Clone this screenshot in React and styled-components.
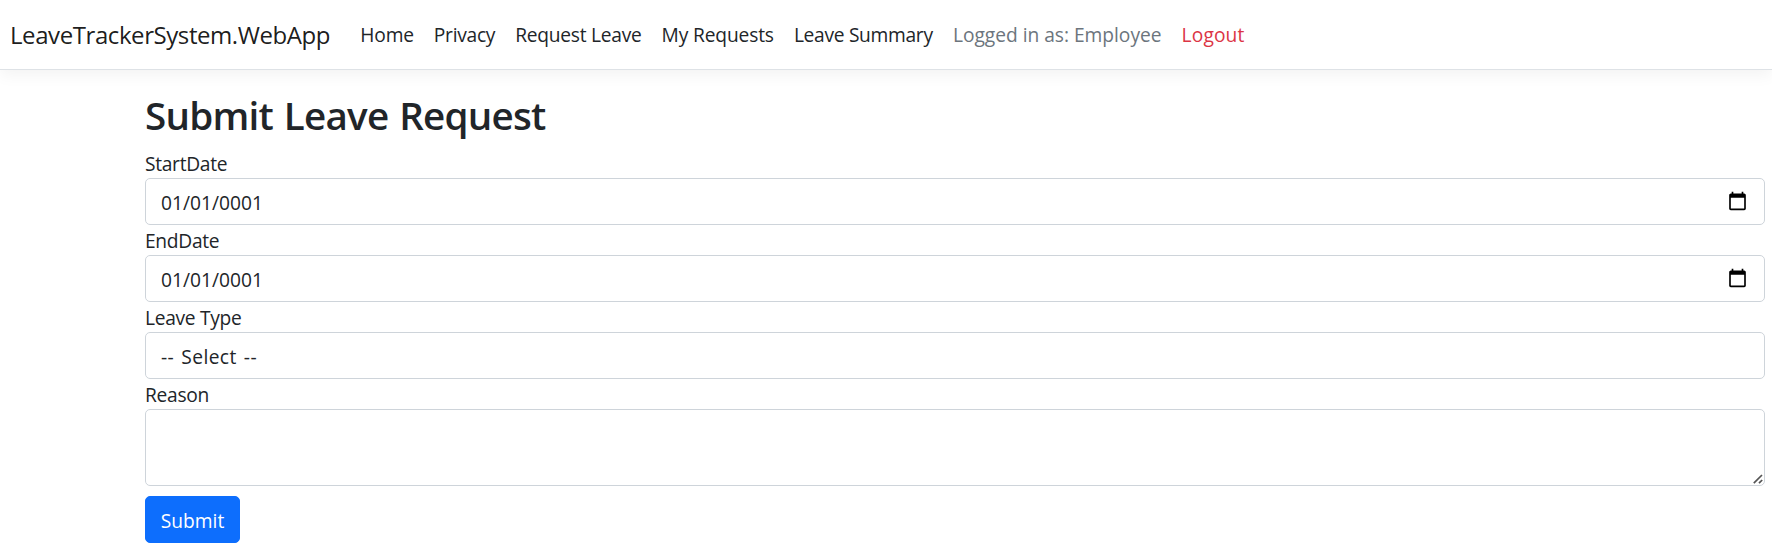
import React from "react";
import styled, { createGlobalStyle, css } from "styled-components";

const GlobalStyle = createGlobalStyle`
  *, *::before, *::after { box-sizing: border-box; }
  body {
    margin: 0;
    background: #fff;
    color: #212529;
    font-family: "Segoe UI", "Open Sans", "Noto Sans", sans-serif;
    font-size: 19.2px;
    line-height: 30px;
    overflow: hidden;
  }
`;

const Navbar = styled.nav`
  display: flex;
  align-items: center;
  height: 70px;
  padding: 0 10px;
  background: #fff;
  border-bottom: 1px solid #dee2e6;
  box-shadow: 0 5px 15px rgba(0, 0, 0, 0.05);
`;

const Brand = styled.a`
  width: 320px;
  margin-right: 20px;
  color: rgba(0, 0, 0, 0.9);
  font-size: 24px;
  letter-spacing: -0.42px;
  white-space: nowrap;
  text-decoration: none;
`;

const NavList = styled.ul`
  display: flex;
  margin: 0;
  padding: 0 0 0 0.3px;
  list-style: none;
`;

const tones = { dark: "#212529", muted: "#6c757d", danger: "#dc3545" };

const NavItem = styled.li`
  box-sizing: content-box;
  width: ${(p) => p.$width}px;
  padding: 0 10px;
  color: ${(p) => tones[p.$tone]};
  letter-spacing: ${(p) => p.$tracking}px;
  white-space: nowrap;
`;

const Main = styled.main`
  padding: 21px 7px 0 145px;
`;

const Title = styled.h2`
  margin: 0 0 9px;
  font-size: 38.6px;
  font-weight: 600;
  line-height: 48px;
  letter-spacing: -0.78px;
  word-spacing: 1.7px;
`;

const Form = styled.form`
  display: flex;
  flex-direction: column;
  align-items: stretch;
`;

const Label = styled.label`
  height: 30px;
  padding-top: 1px;
  line-height: 29px;
  letter-spacing: -0.3px;
`;

const control = css`
  display: block;
  width: 100%;
  height: 47px;
  margin: 0;
  padding: 3px 15px 0;
  border: 1px solid #ced4da;
  border-radius: 5px;
  outline: none;
  background: #fff;
  color: #212529;
  font: inherit;
  appearance: none;
`;

const DateInput = styled.input`
  ${control}
  padding-right: 16px;
  &::-webkit-datetime-edit-month-field,
  &::-webkit-datetime-edit-day-field,
  &::-webkit-datetime-edit-year-field {
    padding: 0;
  }
  &::-webkit-calendar-picker-indicator {
    width: 21px;
    height: 21px;
    margin-bottom: 3px;
    padding: 0;
  }
`;

const Select = styled.select`
  ${control}
  letter-spacing: 0.4px;
  word-spacing: 1.8px;
`;

const TextAreaWrap = styled.div`
  position: relative;
  height: 77px;
`;

const TextArea = styled.textarea`
  ${control}
  height: 77px;
  resize: none;
`;

const ResizeGrip = styled.svg`
  position: absolute;
  right: 2px;
  bottom: 2px;
  width: 10px;
  height: 10px;
  pointer-events: none;
`;

const SubmitButton = styled.button`
  align-self: flex-start;
  width: 95px;
  height: 47px;
  margin-top: 10px;
  padding: 2px 0 0;
  border: 1px solid #0d6efd;
  border-radius: 5px;
  background: #0d6efd;
  color: #fff;
  font: inherit;
`;

const navItems = [
  { text: "Home", width: 53.5, tracking: -0.18 },
  { text: "Privacy", width: 61.5, tracking: -0.27 },
  { text: "Request Leave", width: 126.3, tracking: -0.27 },
  { text: "My Requests", width: 112.3, tracking: -0.15 },
  { text: "Leave Summary", width: 139, tracking: -0.3 },
  { text: "Logged in as: Employee", width: 208.7, tracking: -0.02, tone: "muted" },
  { text: "Logout", width: 63, tracking: 0.13, tone: "danger" },
];

export default function App() {
  return (
    <>
      <GlobalStyle />
      <Navbar>
        <Brand>LeaveTrackerSystem.WebApp</Brand>
        <NavList>
          {navItems.map((item) => (
            <NavItem
              key={item.text}
              $width={item.width}
              $tracking={item.tracking}
              $tone={item.tone || "dark"}
            >
              {item.text}
            </NavItem>
          ))}
        </NavList>
      </Navbar>
      <Main>
        <Title>Submit Leave Request</Title>
        <Form onSubmit={(e) => e.preventDefault()}>
          <Label htmlFor="start">StartDate</Label>
          <DateInput id="start" type="date" defaultValue="0001-01-01" />
          <Label htmlFor="end">EndDate</Label>
          <DateInput id="end" type="date" defaultValue="0001-01-01" />
          <Label htmlFor="type">Leave Type</Label>
          <Select id="type">
            <option>-- Select --</option>
          </Select>
          <Label htmlFor="reason">Reason</Label>
          <TextAreaWrap>
            <TextArea id="reason" />
            <ResizeGrip viewBox="0 0 10 10" stroke="#555" strokeWidth="1.7">
              <path d="M0.8 9.2 9 1M6 9.2 9.2 6" />
            </ResizeGrip>
          </TextAreaWrap>
          <SubmitButton type="submit">Submit</SubmitButton>
        </Form>
      </Main>
    </>
  );
}
